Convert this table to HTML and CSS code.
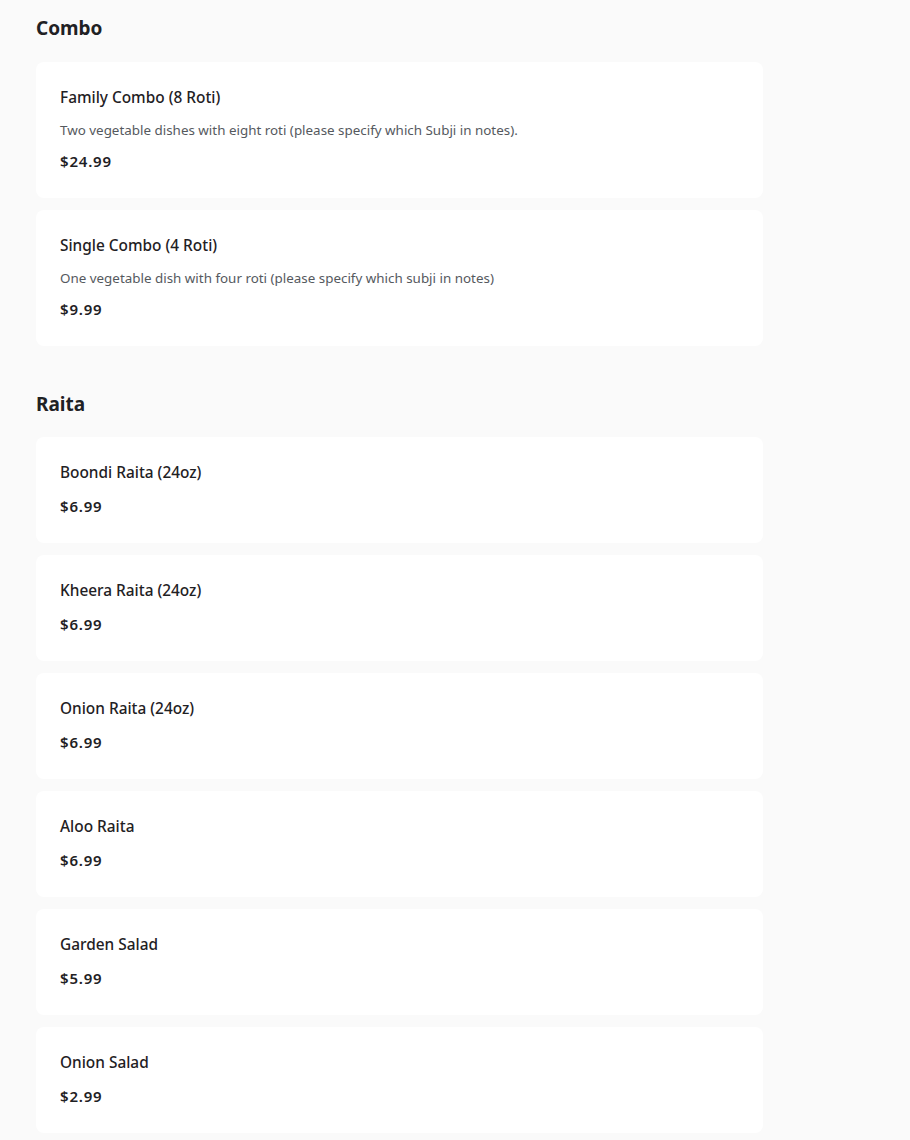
FILE: index.html
```html
<!DOCTYPE html>
<html lang="en">
<head>
<meta charset="utf-8">
<title>Menu</title>
<link rel="stylesheet" href="styles.css">
</head>
<body>
<main class="menu">
  <section class="section">
    <h2 class="section-title">Combo</h2>
    <div class="items">
      <article class="item">
        <h3 class="item-name">Family Combo (8 Roti)</h3>
        <p class="item-desc">Two vegetable dishes with eight roti (please specify which Subji in notes).</p>
        <p class="item-price">$24.99</p>
      </article>
      <article class="item">
        <h3 class="item-name">Single Combo (4 Roti)</h3>
        <p class="item-desc">One vegetable dish with four roti (please specify which subji in notes)</p>
        <p class="item-price">$9.99</p>
      </article>
    </div>
  </section>
  <section class="section">
    <h2 class="section-title">Raita</h2>
    <div class="items">
      <article class="item">
        <h3 class="item-name">Boondi Raita (24oz)</h3>
        <p class="item-price">$6.99</p>
      </article>
      <article class="item">
        <h3 class="item-name">Kheera Raita (24oz)</h3>
        <p class="item-price">$6.99</p>
      </article>
      <article class="item">
        <h3 class="item-name">Onion Raita (24oz)</h3>
        <p class="item-price">$6.99</p>
      </article>
      <article class="item">
        <h3 class="item-name">Aloo Raita</h3>
        <p class="item-price">$6.99</p>
      </article>
      <article class="item">
        <h3 class="item-name">Garden Salad</h3>
        <p class="item-price">$5.99</p>
      </article>
      <article class="item">
        <h3 class="item-name">Onion Salad</h3>
        <p class="item-price">$2.99</p>
      </article>
    </div>
  </section>
</main>
</body>
</html>
```

FILE: styles.css
```css
html, body {
  margin: 0;
  padding: 0;
  background: #fafafa;
}
body {
  font-family: "Noto Sans", "Open Sans", sans-serif;
  color: #1f2124;
}
.menu {
  width: 727px;
  padding: 16px 0 0 36px;
  display: flex;
  flex-direction: column;
  gap: 46px;
}
.section-title {
  margin: 0 0 22px;
  font-size: 19px;
  line-height: 24px;
  font-weight: 700;
  color: #1f2124;
}
.section + .section .section-title {
  margin-bottom: 21px;
}
.items {
  display: flex;
  flex-direction: column;
  gap: 12px;
}
.item {
  background: #fff;
  border-radius: 8px;
  padding: 26px 24px 27px;
  display: flex;
  flex-direction: column;
}
.item-name {
  margin: 0;
  font-size: 15.4px;
  line-height: 20px;
  font-weight: 500;
  color: #1f2124;
}
.item-desc {
  margin: 13px 0 0;
  font-size: 13.4px;
  line-height: 18px;
  color: #55595e;
}
.item-price {
  margin: 13px 0 0;
  font-size: 15px;
  line-height: 20px;
  font-weight: 600;
  letter-spacing: 0.8px;
  color: #1f2124;
}
.item-desc + .item-price {
  margin-top: 12px;
}
```
